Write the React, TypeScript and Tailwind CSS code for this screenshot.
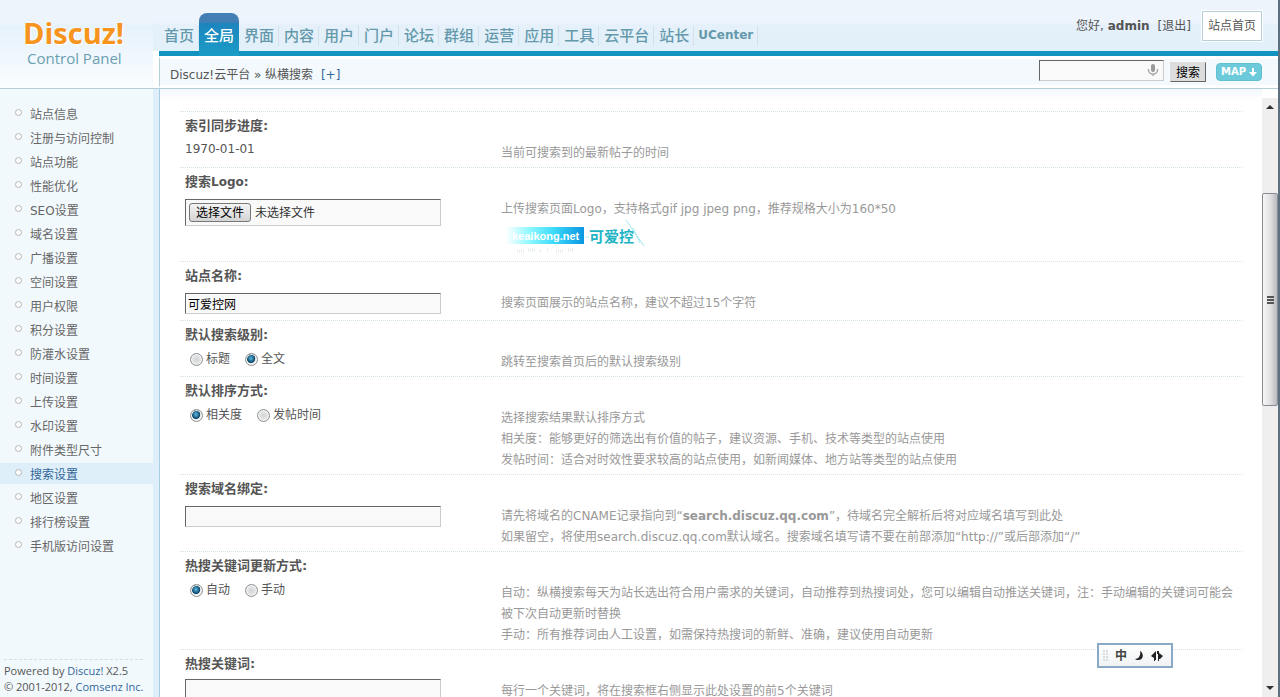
import type { ReactNode } from "react";

const navItems = ["首页", "全局", "界面", "内容", "用户", "门户", "论坛", "群组", "运营", "应用", "工具", "云平台", "站长", "UCenter"];

const menuItems = [
  "站点信息", "注册与访问控制", "站点功能", "性能优化", "SEO设置", "域名设置", "广播设置", "空间设置", "用户权限",
  "积分设置", "防灌水设置", "时间设置", "上传设置", "水印设置", "附件类型尺寸", "搜索设置", "地区设置", "排行榜设置", "手机版访问设置",
];

const fieldBox = "border border-t-[#666] border-l-[#666] border-r-[#ccc] border-b-[#ccc] bg-[#f9f9f9]";

function NavBar() {
  return (
    <nav className="-mb-[5px] flex items-end">
      {navItems.map((item) => {
        if (item === "全局") {
          return (
            <a key={item} href="#" className="flex h-[43px] items-center rounded-t-lg bg-linear-to-b from-[#437fb5] from-20% via-[#1c85bd] via-25% to-[#1b9cc6] px-[5px] pt-[3px] text-[15px] font-medium text-white">
              {item}
            </a>
          );
        }
        const latin = item === "UCenter";
        return (
          <a key={item} href="#" className="flex h-[43px] items-center pt-[3px] text-[#6499ab]">
            <span className={latin ? "px-1 pb-[3px] text-xs font-bold" : "pr-1 pl-[5px] text-[15px] font-medium"}>{item}</span>
            <span className="h-5 w-px bg-[#d3e2ea]" />
          </a>
        );
      })}
    </nav>
  );
}

function Header() {
  return (
    <header className="flex shrink-0 border-b border-[#b5cfd9] bg-white">
      <div className="flex w-[153px] shrink-0 flex-col bg-linear-to-b from-[#edf4fb] from-25% via-[#e6f2fb] via-30% to-[#fafdff] pt-4 font-['Open_Sans','Noto_Sans',sans-serif]">
        <h1 className="pl-[23px] text-[29px] leading-[33px] font-bold text-[#f7941d] [text-shadow:0_0_3px_#fff,1px_1px_1px_#fff]">Discuz!</h1>
        <p className="pl-[27px] text-[15px] leading-[19px] text-[#6a9fb1]">Control Panel</p>
      </div>
      <div className="flex min-w-0 grow flex-col">
        <div className="flex h-14 bg-linear-to-b from-[#edf4fb] from-40% via-[#e5f0fa] via-45% to-[#e1f0fa]">
          <div className="mt-[51px] w-[6px] shrink-0 bg-white" />
          <div className="flex grow items-end justify-between border-b-[5px] border-[#1194bf]">
            <NavBar />
            <div className="flex h-[51px] items-center gap-[11px] pr-4 text-xs text-[#555]">
              <p>
                您好, <strong>admin</strong>
                <a href="#" className="ml-2">[退出]</a>
              </p>
              <a href="#" className="flex h-[30px] items-center border border-[#b5cfd9] bg-white px-[5px] pt-px outline outline-white">站点首页</a>
            </div>
          </div>
        </div>
        <div className="ml-[6px] flex h-8 items-center justify-between border-y-[3px] border-l border-y-white border-l-[#b5cfd9] bg-[#f3f9fc] pr-4 pl-[10px] text-xs">
          <p className="pt-[5px] text-[#555]">
            Discuz!云平台 » 纵横搜索 <a href="#" className="ml-1 text-[#336699]">[+]</a>
          </p>
          <form className="flex items-center gap-[6px]" onSubmit={(e) => e.preventDefault()}>
            <div className={"-mt-1 flex h-[21px] w-[125px] items-center pr-1 " + fieldBox}>
              <input type="text" aria-label="搜索" className="min-w-0 grow bg-transparent px-1 outline-none" />
              <svg width="12" height="14" viewBox="0 0 12 14" className="shrink-0" aria-hidden="true">
                <rect x="4" y="1" width="4" height="8" rx="2" fill="#999" />
                <path d="M1.5 6v1a4.5 4 0 0 0 9 0V6M6 11v2" fill="none" stroke="#aaa" strokeWidth="1.5" />
              </svg>
            </div>
            <button type="submit" className="h-5 w-9 border border-t-[#ddd] border-r-[#666] border-b-[#666] border-l-[#ddd] bg-[#ddd] pt-px text-black">搜索</button>
            <button type="button" className="ml-1 flex h-[18px] w-[46px] items-center justify-center gap-[3px] rounded border border-[#5fc0d2] bg-[#6dcadb] text-[10px] font-bold text-white">
              MAP
              <svg width="8" height="9" viewBox="0 0 8 9" aria-hidden="true">
                <path d="M3 0h2v4h3L4 8.5 0 4h3z" fill="#fff" />
              </svg>
            </button>
          </form>
        </div>
      </div>
    </header>
  );
}

function Sidebar() {
  return (
    <aside className="flex w-40 shrink-0 flex-col justify-between border-r border-[#a9cde0] bg-linear-to-r from-[#f2f9fd] from-[153px] to-[#deeffb] to-[153px] pt-[14px]">
      <ul className="flex flex-col gap-[3px] pr-[6px] text-xs">
        {menuItems.map((item) => {
          const active = item === "搜索设置";
          return (
            <li key={item}>
              <a href="#" className={"flex h-[21px] items-center gap-2 pt-[2px] pl-[15px] " + (active ? "bg-[#deeffa] text-[#336699]" : "text-[#666]")}>
                <span className="mb-[5px] size-[7px] rounded-full border border-[#b5b5b5] bg-white" />
                {item}
              </a>
            </li>
          );
        })}
      </ul>
      <footer className="mr-4 ml-1 border-t border-dashed border-[#d3dde3] pt-[3px] pb-[2px] font-['Open_Sans','Noto_Sans',sans-serif] text-[11px] leading-4 whitespace-nowrap text-[#555]">
        <p>Powered by <a href="#" className="text-[#336699]">Discuz!</a> X2.5</p>
        <p>© 2001-2012, <a href="#" className="text-[#336699]">Comsenz Inc.</a></p>
      </footer>
    </aside>
  );
}

function Row({ label, tip, children }: { label: ReactNode; tip: ReactNode; children: ReactNode }) {
  return (
    <section className="border-t border-dotted border-[#d5e4ea] pt-1 pb-[3px]">
      <h2 className="pl-[5px] text-[13px] leading-5 font-bold text-[#555]">{label}</h2>
      <div className="grid grid-cols-[321px_1fr] items-start text-xs">
        <div className="pl-[5px] text-[#555]">{children}</div>
        <div className="pt-[7px] leading-[21px] text-[#999]">{tip}</div>
      </div>
    </section>
  );
}

function TextField({ label, value }: { label: string; value?: string }) {
  return (
    <div className="pt-[7px] pb-[3px]">
      <input type="text" aria-label={label} defaultValue={value} className={"block h-[21px] w-64 px-[2px] text-xs text-black " + fieldBox} />
    </div>
  );
}

function Radios({ name, options, selected }: { name: string; options: string[]; selected: string }) {
  return (
    <div className="flex gap-[15px] pt-px pl-[5px] leading-[26px]">
      {options.map((option) => (
        <label key={option} className="flex items-center gap-[3px]">
          <input
            type="radio"
            name={name}
            defaultChecked={option === selected}
            className="size-[13px] appearance-none rounded-full border border-[#8e8f8f] bg-radial from-[#d2d5d8] to-[#f2f2f2] ring-1 ring-[#f4f4f4] ring-inset checked:bg-radial-[at_45%_40%] checked:from-[#5fbce4] checked:from-0% checked:via-[#0b4469] checked:via-45% checked:to-[#eee] checked:to-55%"
          />
          {option}
        </label>
      ))}
    </div>
  );
}

function SiteLogo() {
  return (
    <svg width="160" height="38" viewBox="0 0 160 38" className="block font-['DejaVu_Sans','Noto_Sans_CJK_SC',sans-serif]" role="img" aria-label="可爱控">
      <defs>
        <linearGradient id="band" x1="0" x2="1">
          <stop offset="0" stopColor="#fff" />
          <stop offset="0.3" stopColor="#8ff8ff" />
          <stop offset="0.6" stopColor="#3fdcfb" />
          <stop offset="1" stopColor="#0b96e2" />
        </linearGradient>
      </defs>
      <rect x="5" y="7" width="78" height="17" fill="url(#band)" />
      <text x="11" y="20" fontSize="11" fontWeight="bold" fill="#fff" fontFamily="Liberation Sans, sans-serif">keaikong.net</text>
      <path d="M84 17h4" stroke="#b9f3f5" />
      <text x="88" y="22" fontSize="15" fontWeight="bold" fill="#22b4c4">可爱控</text>
      <path d="M125 0l18 26M132 8l7 15" stroke="#a5e9f0" fill="none" />
      <path d="M16 31h7M27 30h8M39 31h2M46 30h2M55 31h7M67 30h5" stroke="#e6ecee" strokeWidth="3" strokeDasharray="1 1" />
    </svg>
  );
}

function Settings() {
  return (
    <main className="min-w-0 grow overflow-hidden bg-linear-to-b from-[#f2f8fc] to-white to-[12px] pt-[22px] pr-5 pl-5">
      <Row label="索引同步进度:" tip="当前可搜索到的最新帖子的时间">
        <p className="pt-px leading-6">1970-01-01</p>
      </Row>
      <Row
        label={<>搜索<span className="text-xs">Logo:</span></>}
        tip={<>上传搜索页面Logo，支持格式gif jpg jpeg png，推荐规格大小为160*50<SiteLogo /></>}
      >
        <div className="pt-[7px]">
          <label className={"flex h-[27px] w-64 items-center gap-1 pl-[3px] " + fieldBox}>
            <input type="file" className="sr-only" />
            <span className="flex h-[19px] w-[62px] items-center justify-center rounded-[3px] border border-[#777] bg-linear-to-b from-[#f4f4f4] to-[#d4d4d4] pt-px text-black">选择文件</span>
            <span className="pt-px text-[#333]">未选择文件</span>
          </label>
        </div>
      </Row>
      <Row label="站点名称:" tip="搜索页面展示的站点名称，建议不超过15个字符">
        <TextField label="站点名称" value="可爱控网" />
      </Row>
      <Row label="默认搜索级别:" tip="跳转至搜索首页后的默认搜索级别">
        <Radios name="level" options={["标题", "全文"]} selected="全文" />
      </Row>
      <Row
        label="默认排序方式:"
        tip={
          <>
            <p>选择搜索结果默认排序方式</p>
            <p>相关度：能够更好的筛选出有价值的帖子，建议资源、手机、技术等类型的站点使用</p>
            <p>发帖时间：适合对时效性要求较高的站点使用，如新闻媒体、地方站等类型的站点使用</p>
          </>
        }
      >
        <Radios name="order" options={["相关度", "发帖时间"]} selected="相关度" />
      </Row>
      <Row
        label="搜索域名绑定:"
        tip={
          <>
            <p>请先将域名的CNAME记录指向到“<strong>search.discuz.qq.com</strong>”，待域名完全解析后将对应域名填写到此处</p>
            <p>如果留空，将使用search.discuz.qq.com默认域名。搜索域名填写请不要在前部添加“http://”或后部添加“/”</p>
          </>
        }
      >
        <TextField label="搜索域名绑定" />
      </Row>
      <Row
        label="热搜关键词更新方式:"
        tip={
          <>
            <p>自动：纵横搜索每天为站长选出符合用户需求的关键词，自动推荐到热搜词处，您可以编辑自动推送关键词，注：手动编辑的关键词可能会被下次自动更新时替换</p>
            <p>手动：所有推荐词由人工设置，如需保持热搜词的新鲜、准确，建议使用自动更新</p>
          </>
        }
      >
        <Radios name="update" options={["自动", "手动"]} selected="自动" />
      </Row>
      <Row label="热搜关键词:" tip="每行一个关键词，将在搜索框右侧显示此处设置的前5个关键词">
        <div className="pt-[5px]">
          <textarea aria-label="热搜关键词" className={"block h-24 w-64 resize-none " + fieldBox} />
        </div>
      </Row>
    </main>
  );
}

function ScrollTrack() {
  return (
    <div className="mt-[9px] flex w-4 shrink-0 flex-col items-center bg-[#efefef]" aria-hidden="true">
      <svg width="8" height="4" viewBox="0 0 8 4" className="my-[7px] shrink-0"><path d="M0 4l4-4 4 4z" fill="#333" /></svg>
      <div className="grow-[77]" />
      <div className="flex w-full grow-[205] flex-col items-center justify-center gap-px rounded-xs border border-[#888d94] bg-linear-to-r from-[#f7f7f7] via-[#e2e2e4] to-[#b9babf]">
        <span className="h-[2px] w-[7px] bg-[#555]" />
        <span className="h-[2px] w-[7px] bg-[#555]" />
        <span className="h-[2px] w-[7px] bg-[#555]" />
      </div>
      <div className="grow-[274]" />
      <svg width="8" height="4" viewBox="0 0 8 4" className="my-[7px] shrink-0"><path d="M0 0l4 4 4-4z" fill="#333" /></svg>
    </div>
  );
}

function InputMethodBar() {
  return (
    <div className="absolute right-[105px] bottom-[29px] flex h-[25px] w-[76px] items-center gap-2 border-2 border-[#8aa9c6] bg-linear-to-b from-white to-[#f0f2f4] pl-1 text-xs font-bold text-[#444]">
      <svg width="5" height="12" viewBox="0 0 5 12" className="-mr-px" aria-hidden="true">
        <path d="M1 0v12M4 0v12" stroke="#b3c4cc" strokeDasharray="2 1" />
      </svg>
      <span>中</span>
      <svg width="8" height="9" viewBox="0 0 8 9" aria-hidden="true"><path d="M5 0c4 2 4 9-2 9C1.500 9 .5 8.500 0 8c4 0 6-4 5-8z" fill="#222" /></svg>
      <svg width="12" height="12" viewBox="0 0 12 12" aria-hidden="true">
        <path d="M5 1v9H4v1H3V8L0 6l4-4zM6 1h2v2l4 3-3 3H8v2H7V4H6z" fill="#222" />
      </svg>
    </div>
  );
}

export default function App() {
  return (
    <div className="relative flex h-screen flex-col overflow-hidden border-r-2 border-[#5d7080] bg-white font-['DejaVu_Sans','Noto_Sans_CJK_SC',sans-serif]">
      <Header />
      <div className="flex min-h-0 grow">
        <Sidebar />
        <Settings />
        <ScrollTrack />
      </div>
      <InputMethodBar />
    </div>
  );
}
